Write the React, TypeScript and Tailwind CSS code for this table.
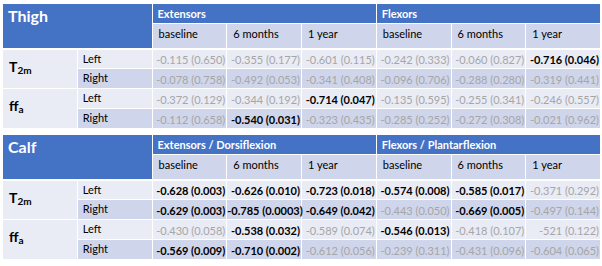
import React from "react";

type Cell = [string, boolean];

const LIGHT = "bg-[#e9ebf5]";
const DARK = "bg-[#cfd5ea]";

function Label({ main, sub }: { main: string; sub: string }) {
  return (
    <span className="font-bold text-[14px] leading-none text-black">
      {main}
      <sub className="text-[10px] relative top-[2px] align-baseline">{sub}</sub>
    </span>
  );
}

function Table({
  title,
  g1,
  g2,
  rows,
}: {
  title: string;
  g1: string;
  g2: string;
  rows: Cell[][];
}) {
  const sub = ["baseline", "6 months", "1 year", "baseline", "6 months", "1 year"];
  const labels = ["Left", "Right", "Left", "Right"];
  return (
    <table className="table-fixed border-collapse w-[598px] ml-[2px]">
      <colgroup>
        {Array.from({ length: 8 }).map((_, i) => (
          <col key={i} className="w-[74.75px]" />
        ))}
      </colgroup>
      <tbody>
        <tr className="h-[20px]">
          <td
            colSpan={2}
            rowSpan={2}
            className="bg-[#4472c4] border border-white border-b-2 align-top pl-[5px] pt-[2px] text-white font-bold text-[16px] leading-[20px]"
          >
            {title}
          </td>
          <td
            colSpan={3}
            className="bg-[#4472c4] border border-white align-middle pl-[5px] text-white font-bold text-[11px] leading-none"
          >
            {g1}
          </td>
          <td
            colSpan={3}
            className="bg-[#4472c4] border border-white align-middle pl-[5px] text-white font-bold text-[11px] leading-none"
          >
            {g2}
          </td>
        </tr>
        <tr className="h-[25px]">
          {sub.map((s, i) => (
            <td
              key={i}
              className={`${DARK} border border-white border-b-2 align-top pl-[6px] pt-[3px] text-[11px] leading-[14px] text-black`}
            >
              {s}
            </td>
          ))}
        </tr>
        {rows.map((r, ri) => (
          <tr key={ri} className="h-[20px]">
            {ri % 2 === 0 && (
              <td
                rowSpan={2}
                className={`${LIGHT} border border-white align-top pl-[6px] pt-[4px]`}
              >
                {ri === 0 ? <Label main="T" sub="2m" /> : <Label main="ff" sub="a" />}
              </td>
            )}
            <td
              className={`${ri % 2 === 0 ? LIGHT : DARK} border border-white align-top pl-[5px] pt-[2px] text-[11px] leading-[13px] text-black`}
            >
              {labels[ri]}
            </td>
            {r.map(([v, b], ci) => (
              <td
                key={ci}
                className={`${ri % 2 === 0 ? LIGHT : DARK} border border-white align-bottom text-right pr-[1px] pb-[2px] text-[11px] leading-[13px] whitespace-nowrap overflow-visible ${
                  b ? "font-bold text-black" : "text-[#a6a6a6]"
                }`}
              >
                {v}
              </td>
            ))}
          </tr>
        ))}
      </tbody>
    </table>
  );
}

const thigh: Cell[][] = [
  [
    ["-0.115 (0.650)", false],
    ["-0.355 (0.177)", false],
    ["-0.601 (0.115)", false],
    ["-0.242 (0.333)", false],
    ["-0.060 (0.827)", false],
    ["-0.716 (0.046)", true],
  ],
  [
    ["-0.078 (0.758)", false],
    ["-0.492 (0.053)", false],
    ["-0.341 (0.408)", false],
    ["-0.096 (0.706)", false],
    ["-0.288 (0.280)", false],
    ["-0.319 (0.441)", false],
  ],
  [
    ["-0.372 (0.129)", false],
    ["-0.344 (0.192)", false],
    ["-0.714 (0.047)", true],
    ["-0.135 (0.595)", false],
    ["-0.255 (0.341)", false],
    ["-0.246 (0.557)", false],
  ],
  [
    ["-0.112 (0.658)", false],
    ["-0.540 (0.031)", true],
    ["-0.323 (0.435)", false],
    ["-0.285 (0.252)", false],
    ["-0.272 (0.308)", false],
    ["-0.021 (0.962)", false],
  ],
];

const calf: Cell[][] = [
  [
    ["-0.628 (0.003)", true],
    ["-0.626 (0.010)", true],
    ["-0.723 (0.018)", true],
    ["-0.574 (0.008)", true],
    ["-0.585 (0.017)", true],
    ["-0.371 (0.292)", false],
  ],
  [
    ["-0.629 (0.003)", true],
    ["-0.785 (0.0003)", true],
    ["-0.649 (0.042)", true],
    ["-0.443 (0.050)", false],
    ["-0.669 (0.005)", true],
    ["-0.497 (0.144)", false],
  ],
  [
    ["-0.430 (0.058)", false],
    ["-0.538 (0.032)", true],
    ["-0.589 (0.074)", false],
    ["-0.546 (0.013)", true],
    ["-0.418 (0.107)", false],
    ["-521 (0.122)", false],
  ],
  [
    ["-0.569 (0.009)", true],
    ["-0.710 (0.002)", true],
    ["-0.612 (0.056)", false],
    ["-0.239 (0.311)", false],
    ["-0.431 (0.096)", false],
    ["-0.604 (0.065)", false],
  ],
];

export default function App() {
  return (
    <div className="w-[602px] h-[266px] bg-white overflow-hidden font-['Lato',sans-serif] pt-[3px] flex flex-col gap-[5px]">
      <Table title="Thigh" g1="Extensors" g2="Flexors" rows={thigh} />
      <Table title="Calf" g1="Extensors / Dorsiflexion" g2="Flexors / Plantarflexion" rows={calf} />
    </div>
  );
}
